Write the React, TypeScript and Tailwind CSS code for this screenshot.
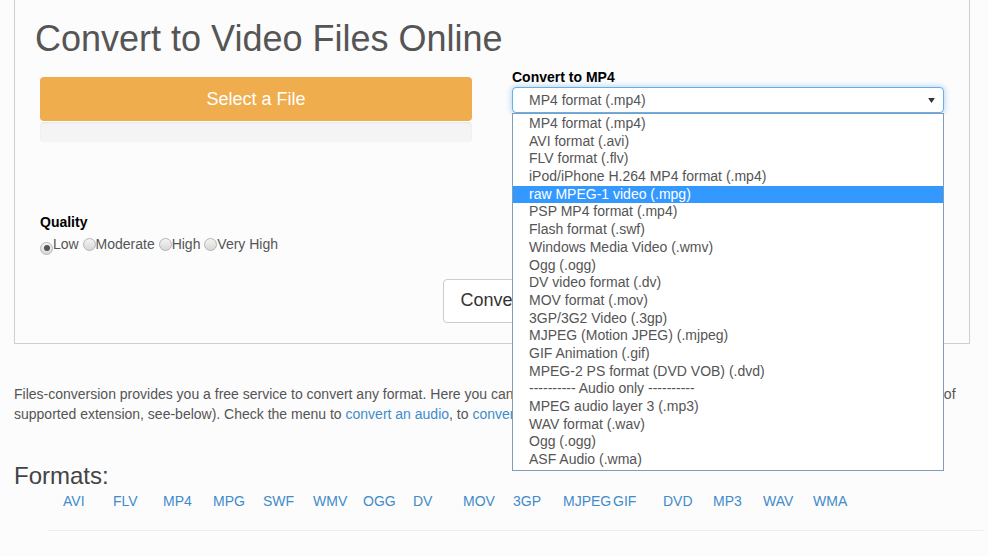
import React from 'react';

const options = [
    'MP4 format (.mp4)',
    'AVI format (.avi)',
    'FLV format (.flv)',
    'iPod/iPhone H.264 MP4 format (.mp4)',
    'raw MPEG-1 video (.mpg)',
    'PSP MP4 format (.mp4)',
    'Flash format (.swf)',
    'Windows Media Video (.wmv)',
    'Ogg (.ogg)',
    'DV video format (.dv)',
    'MOV format (.mov)',
    '3GP/3G2 Video (.3gp)',
    'MJPEG (Motion JPEG) (.mjpeg)',
    'GIF Animation (.gif)',
    'MPEG-2 PS format (DVD VOB) (.dvd)',
    '---------- Audio only ----------',
    'MPEG audio layer 3 (.mp3)',
    'WAV format (.wav)',
    'Ogg (.ogg)',
    'ASF Audio (.wma)',
];

const formats = ['AVI', 'FLV', 'MP4', 'MPG', 'SWF', 'WMV', 'OGG', 'DV', 'MOV', '3GP', 'MJPEG', 'GIF', 'DVD', 'MP3', 'WAV', 'WMA'];

const Radio: React.FC<{ checked?: boolean }> = ({ checked }) => (
    <span className="inline-flex items-center justify-center w-[13px] h-[13px] rounded-full border border-[#b4b4b4] bg-gradient-to-b from-[#f4f4f4] to-[#d8d8d8] align-[-2px]">
        {checked && <span className="w-[6px] h-[6px] rounded-full bg-[#555]" />}
    </span>
);

const App: React.FC = () => {
    return (
        <div className="min-h-[556px] bg-[#fcfcfc] font-['Liberation_Sans',Arial,sans-serif] text-[14px] text-[#555] overflow-hidden">
            {/* Converter panel */}
            <div className="ml-[14px] w-[956px] border-x border-b border-[#cfcfcf] pb-[20px]">
                <h1 className="pt-[19px] pl-[20px] text-[36px] leading-[40px] text-[#555]">Convert to Video Files Online</h1>

                <div className="flex">
                    <div className="ml-[25px] w-[432px] mt-[18px]">
                        <div className="h-[44px] rounded-[4px] bg-[#f0ad4e] flex items-center justify-center text-white text-[18px]">
                            Select a File
                        </div>
                        <div className="mt-[1px] h-[20px] rounded-[4px] bg-[#f4f4f4] shadow-[inset_0_1px_2px_rgba(0,0,0,0.06)]" />

                        <div className="mt-[70px]">
                            <div className="font-bold text-black leading-[20px]">Quality</div>
                            <div className="mt-[2px] leading-[20px]">
                                <Radio checked />Low <Radio />Moderate <Radio />High <Radio />Very High
                            </div>
                        </div>
                    </div>

                    <div className="ml-[40px] w-[432px] mt-[8px]">
                        <div className="font-bold text-black leading-[20px]">Convert to MP4</div>
                        <div className="relative">
                            <div className="h-[26px] rounded-[4px] border border-[#66afe9] bg-white shadow-[0_0_6px_rgba(102,175,233,0.6)] flex items-center pl-[16px] pr-[8px]">
                                <span className="flex-1">MP4 format (.mp4)</span>
                                <svg width="7" height="5" viewBox="0 0 8 6">
                                    <path d="M0 0h8L4 6z" fill="#333" />
                                </svg>
                            </div>
                            {/* Open option list */}
                            <div className="absolute left-0 top-[26px] z-10 w-[432px] border border-[#7f9db9] bg-white py-[1px]">
                                {options.map((o, i) => (
                                    <div
                                        key={i}
                                        className={
                                            i === 4
                                                ? 'h-[17.7px] leading-[17.7px] pl-[16px] bg-[#3399ff] text-white whitespace-nowrap'
                                                : 'h-[17.7px] leading-[17.7px] pl-[16px] text-[#555] whitespace-nowrap'
                                        }
                                    >
                                        {o}
                                    </div>
                                ))}
                            </div>
                        </div>
                    </div>
                </div>

                <div className="mt-[24px] flex justify-center">
                    <div className="h-[44px] px-[16px] rounded-[4px] border border-[#ccc] bg-white flex items-center text-[18px] text-[#333]">
                        Convert
                    </div>
                </div>
            </div>

            {/* Description */}
            <p className="ml-[14px] mt-[40px] leading-[20px]">
                <span className="whitespace-nowrap">
                    Files-conversion provides you a free service to convert any format. Here you can convert your video files into a greater number of formats (see the list of
                </span>
                <br />
                <span className="whitespace-nowrap">
                    supported extension, see-below). Check the menu to <a className="text-[#428bca]">convert an audio</a>, to <a className="text-[#428bca]">convert an image</a> or a document.
                </span>
            </p>

            <h2 className="ml-[14px] mt-[39px] text-[24px] leading-[26px] text-[#444]">Formats:</h2>
            <div className="ml-[63px] mt-[2px] flex leading-[20px]">
                {formats.map((f) => (
                    <a key={f} className="w-[50px] shrink-0 text-[#428bca] whitespace-nowrap">
                        {f}
                    </a>
                ))}
            </div>
            <div className="ml-[48px] mt-[19px] w-[935px] h-px bg-[#eee]" />
        </div>
    );
};

export default App;
